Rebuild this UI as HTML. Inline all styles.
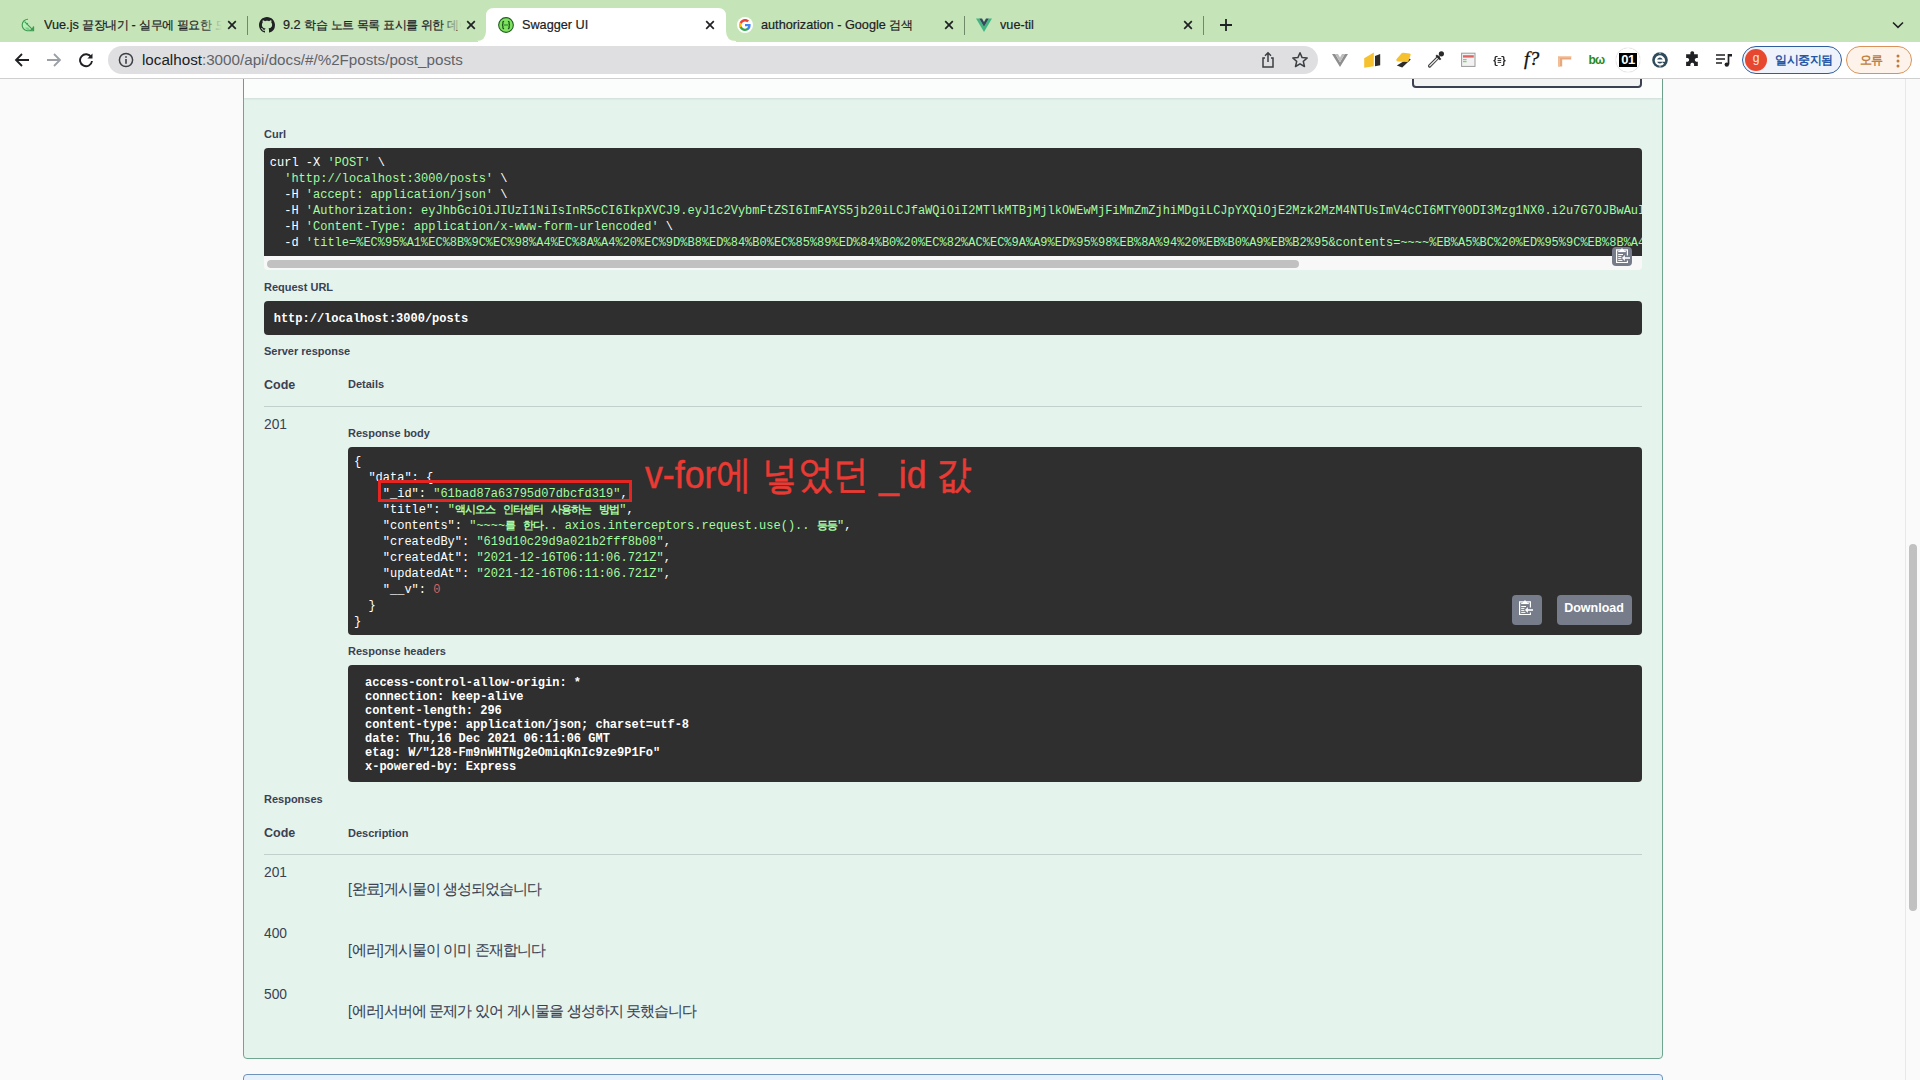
<!DOCTYPE html>
<html><head><meta charset="utf-8">
<style>
*{box-sizing:border-box;margin:0;padding:0}
html,body{width:1920px;height:1080px;overflow:hidden;background:#fafafa;font-family:"Liberation Sans",sans-serif;position:relative}
.a{position:absolute}
#tabbar{position:absolute;left:0;top:0;width:1920px;height:41px;background:#c5e5b9}
#toolbar{position:absolute;left:0;top:41px;width:1920px;height:38px;background:#fff;border-bottom:1px solid #cfcfcf}
.tt{position:absolute;top:17px;font-size:12.7px;line-height:16px;color:#202124;-webkit-text-stroke:0.2px #202124;white-space:nowrap;overflow:hidden}
.kd{font-size:15px;letter-spacing:-1.05px;-webkit-text-stroke:0.1px #3b4151}
.kt{font-size:11.6px;letter-spacing:-0.6px}
.fade{position:absolute;top:10px;width:22px;height:20px;background:linear-gradient(to right,rgba(197,229,185,0),#c5e5b9)}
.x{position:absolute;top:20px;width:10px;height:10px}
.sep{position:absolute;top:16px;width:1px;height:19px;background:#6f8a69}
.ico{position:absolute}
#page{position:absolute;left:0;top:79px;width:1905px;height:1001px;background:#fafafa;overflow:hidden}
#sb{position:absolute;left:1905px;top:79px;width:15px;height:1001px;background:#fafafa;border-left:1px solid #e8e8e8}
#thumb{position:absolute;left:1909px;top:544px;width:8px;height:367px;background:#c1c1c1;border-radius:4px}
.opblock{position:absolute;left:243px;top:-200px;width:1420px;height:1180px;border:1px solid #49cc90;border-radius:4px;background:#e8f5ef}
.lbl{position:absolute;font-size:11px;line-height:14px;font-weight:bold;color:#3b4151;white-space:nowrap}
.code{position:absolute;background:#333;border-radius:4px;overflow:hidden}
.mono{font-family:"Liberation Mono",monospace}
.g{color:#a2fca2}
.w{color:#fff}
.k{font-size:10.8px;letter-spacing:-0.8px;font-weight:bold}
pre{font-family:"Liberation Mono",monospace;font-size:12px;line-height:16px;white-space:pre;color:#fff;font-weight:normal}
</style></head><body>
<div id="tabbar">
  <!-- tab 1 -->
  <svg class="ico" style="left:20px;top:17px" width="16" height="16" viewBox="0 0 16 16"><path d="M8 2.2A5.8 5.8 0 1 0 13.6 9.4V13.8H8.6" fill="#b6f0b8" stroke="#3d9a50" stroke-width="1.1"/><path d="M4.6 4.6L13.3 13.4M6.5 7.5L7.8 6.2" stroke="#3d9a50" stroke-width="1.1"/><path d="M5 10.4H8.2L10.6 13.1H7Z" fill="#7fcf8a"/></svg>
  <div class="tt" style="left:44px;width:178px">Vue.js <span class=kt>끝장내기</span> - <span class=kt>실무에</span> <span class=kt>필요한</span> <span class=kt>모든</span> <span class=kt>것</span></div>
  <div class="fade" style="left:200px"></div>
  <svg class="x" style="left:227px" viewBox="0 0 10 10"><path d="M1.2 1.2L8.8 8.8M8.8 1.2L1.2 8.8" stroke="#202124" stroke-width="1.7"/></svg>
  <div class="sep" style="left:247px"></div>
  <!-- tab 2 -->
  <svg class="ico" style="left:259px;top:17px" width="16" height="16" viewBox="0 0 16 16"><path fill="#202124" d="M8 0C3.58 0 0 3.58 0 8c0 3.54 2.29 6.53 5.47 7.59.4.07.55-.17.55-.38 0-.19-.01-.82-.01-1.49-2.01.37-2.53-.49-2.69-.94-.09-.23-.48-.94-.82-1.13-.28-.15-.68-.52-.01-.53.63-.01 1.08.58 1.23.82.72 1.21 1.87.87 2.33.66.07-.52.28-.87.51-1.07-1.78-.2-3.64-.89-3.64-3.95 0-.87.31-1.59.82-2.15-.08-.2-.36-1.02.08-2.12 0 0 .67-.21 2.2.82.64-.18 1.32-.27 2-.27.68 0 1.36.09 2 .27 1.53-1.04 2.2-.82 2.2-.82.44 1.1.16 1.92.08 2.12.51.56.82 1.27.82 2.15 0 3.07-1.87 3.75-3.65 3.95.29.25.54.73.54 1.48 0 1.07-.01 1.93-.01 2.2 0 .21.15.46.55.38A8.013 8.013 0 0016 8c0-4.42-3.58-8-8-8z"/></svg>
  <div class="tt" style="left:283px;width:178px">9.2 <span class=kt>학습</span> <span class=kt>노트</span> <span class=kt>목록</span> <span class=kt>표시를</span> <span class=kt>위한</span> <span class=kt>데이터</span> <span class=kt>조회</span></div>
  <div class="fade" style="left:440px"></div>
  <svg class="x" style="left:466px" viewBox="0 0 10 10"><path d="M1.2 1.2L8.8 8.8M8.8 1.2L1.2 8.8" stroke="#202124" stroke-width="1.7"/></svg>
  <!-- active tab -->
  <svg class="ico" style="left:476px;top:8px" width="262" height="33" viewBox="0 0 262 33"><path d="M0 33 Q10 33 10 23 L10 8 Q10 0 18 0 L242 0 Q250 0 250 8 L250 23 Q250 33 260 33 Z" fill="#fff"/></svg>
  <svg class="ico" style="left:498px;top:17px" width="16" height="16" viewBox="0 0 16 16"><circle cx="8" cy="8" r="7.35" fill="#7fe25f" stroke="#215d22" stroke-width="1.1"/><path d="M6.1 4.3Q4.8 4.3 4.9 5.6V7.1Q4.9 7.9 4 8Q4.9 8.1 4.9 8.9V10.4Q4.8 11.7 6.1 11.7M9.9 4.3Q11.2 4.3 11.1 5.6V7.1Q11.1 7.9 12 8Q11.1 8.1 11.1 8.9V10.4Q11.2 11.7 9.9 11.7" fill="none" stroke="#1b4f1b" stroke-width="1.25"/><rect x="5.9" y="7.3" width="4.2" height="1.4" fill="#3a9a35"/></svg>
  <div class="tt" style="left:522px">Swagger UI</div>
  <svg class="x" style="left:705px" viewBox="0 0 10 10"><path d="M1.2 1.2L8.8 8.8M8.8 1.2L1.2 8.8" stroke="#202124" stroke-width="1.7"/></svg>
  <!-- tab 4 -->
  <div class="a" style="left:737px;top:17px;width:16px;height:16px;border-radius:8px;background:#fff"></div><svg class="ico" style="left:739px;top:19px" width="12" height="12" viewBox="0 0 16 16"><path d="M15.5 8.2c0-.6-.05-1.1-.15-1.6H8v3h4.2c-.2 1-.75 1.8-1.6 2.35v2h2.6c1.5-1.4 2.3-3.4 2.3-5.75z" fill="#4285f4"/><path d="M8 16c2.15 0 3.95-.7 5.25-1.95l-2.6-2c-.7.5-1.6.8-2.65.8-2.05 0-3.8-1.4-4.4-3.25H.9v2.05C2.2 14.25 4.9 16 8 16z" fill="#34a853"/><path d="M3.6 9.6c-.15-.5-.25-1-.25-1.6s.1-1.1.25-1.6V4.35H.9C.35 5.45 0 6.7 0 8s.35 2.55.9 3.65l2.7-2.05z" fill="#fbbc05"/><path d="M8 3.2c1.2 0 2.25.4 3.1 1.2l2.3-2.3C12 .8 10.15 0 8 0 4.9 0 2.2 1.75.9 4.35l2.7 2.05C4.2 4.6 5.95 3.2 8 3.2z" fill="#ea4335"/></svg>
  <div class="tt" style="left:761px">authorization - Google <span class=kt>검색</span></div>
  <svg class="x" style="left:944px" viewBox="0 0 10 10"><path d="M1.2 1.2L8.8 8.8M8.8 1.2L1.2 8.8" stroke="#202124" stroke-width="1.7"/></svg>
  <div class="sep" style="left:964px"></div>
  <!-- tab 5 -->
  <svg class="ico" style="left:976px;top:17px" width="16" height="16" viewBox="0 0 16 16"><path d="M0 1.5 H3.2 L8 9.8 L12.8 1.5 H16 L8 15 Z" fill="#41b883"/><path d="M3.2 1.5 H6 L8 5 L10 1.5 H12.8 L8 9.8 Z" fill="#34495e"/></svg>
  <div class="tt" style="left:1000px">vue-til</div>
  <svg class="x" style="left:1183px" viewBox="0 0 10 10"><path d="M1.2 1.2L8.8 8.8M8.8 1.2L1.2 8.8" stroke="#202124" stroke-width="1.7"/></svg>
  <div class="sep" style="left:1203px"></div>
  <svg class="ico" style="left:1219px;top:18px" width="14" height="14" viewBox="0 0 14 14"><path d="M7 1V13M1 7H13" stroke="#202124" stroke-width="1.8"/></svg>
  <svg class="ico" style="left:1892px;top:21px" width="12" height="8" viewBox="0 0 12 8"><path d="M1 1.5L6 6.3L11 1.5" fill="none" stroke="#202124" stroke-width="1.6"/></svg>
</div>
<div id="toolbar">
  <svg class="ico" style="left:14px;top:11px" width="16" height="16" viewBox="0 0 16 16"><path d="M15 8H2M8 2L2 8L8 14" fill="none" stroke="#202124" stroke-width="1.8"/></svg>
  <svg class="ico" style="left:46px;top:11px" width="16" height="16" viewBox="0 0 16 16"><path d="M1 8H14M8 2L14 8L8 14" fill="none" stroke="#9aa0a6" stroke-width="1.8"/></svg>
  <svg class="ico" style="left:78px;top:11px" width="16" height="16" viewBox="0 0 16 16"><path d="M13.2 5.2A6 6 0 1 0 14 9" fill="none" stroke="#202124" stroke-width="1.9"/><path d="M14.5 1.5V6.6H9.4Z" fill="#202124"/></svg>
  <div class="a" style="left:108px;top:5px;width:1210px;height:28px;border-radius:14px;background:#dfdfe2"></div>
  <svg class="ico" style="left:118px;top:11px" width="16" height="16" viewBox="0 0 16 16"><circle cx="8" cy="8" r="6.6" fill="none" stroke="#3c4043" stroke-width="1.5"/><rect x="7.2" y="7" width="1.6" height="4.8" fill="#3c4043"/><rect x="7.2" y="4.2" width="1.6" height="1.6" fill="#3c4043"/></svg>
  <div class="a" style="left:142px;top:10px;font-size:15.2px;line-height:17px;color:#202124;white-space:nowrap">localhost<span style="color:#5f6368">:3000/api/docs/#/%2Fposts/post_posts</span></div>
  <svg class="ico" style="left:1260px;top:10px" width="16" height="18" viewBox="0 0 16 18"><path d="M5 7H3V16H13V7H11" fill="none" stroke="#3c4043" stroke-width="1.5"/><path d="M8 11V2M5 4.8L8 1.8L11 4.8" fill="none" stroke="#3c4043" stroke-width="1.5"/></svg>
  <svg class="ico" style="left:1291px;top:10px" width="18" height="18" viewBox="0 0 18 18"><path d="M9 1.8L11.1 6.6L16.2 7L12.3 10.4L13.5 15.5L9 12.8L4.5 15.5L5.7 10.4L1.8 7L6.9 6.6Z" fill="none" stroke="#3c4043" stroke-width="1.5" stroke-linejoin="round"/></svg>
  <!-- extensions -->
  <svg class="ico" style="left:1332px;top:11px" width="16" height="16" viewBox="0 0 16 16"><path d="M0 2H3.2L8 10.2L12.8 2H16L8 15Z" fill="#8f8f8f"/><path d="M3.2 2H6L8 5.4L10 2H12.8L8 10.2Z" fill="#bdbdbd"/></svg>
  <svg class="ico" style="left:1360px;top:50px;position:fixed" width="24" height="20" viewBox="1360 50 24 20"><path d="M1364.2 58.2L1373.8 52.6V66.2L1364.2 67.8Z" fill="#f6c12e"/><path d="M1375 56L1380.2 54V65.2L1375 66.3Z" fill="#2e2b28"/></svg>
  <svg class="ico" style="left:1392px;top:50px;position:fixed" width="24" height="20" viewBox="1392 50 24 20"><path d="M1396.8 65.6L1402.2 67.6L1410.8 59.6L1408.6 58.2Z" fill="#2e2b28"/><path d="M1396.4 60.4Q1396 59.6 1396.8 58.8L1401.6 53.2Q1402.3 52.5 1403.2 52.7L1409.6 53.6Q1411 54 1410.6 55L1408.4 61.2Q1408 62 1407 62L1398 61.6Q1397 61.5 1396.4 60.4Z" fill="#f6c12e"/></svg>
  <svg class="ico" style="left:1424px;top:48px;position:fixed" width="24" height="22" viewBox="1424 48 24 22"><path d="M1429.6 66L1438.4 57.2" stroke="#3a3a3a" stroke-width="3.2" stroke-linecap="round"/><path d="M1429.8 65.8L1438.2 57.4" stroke="#e6e6e6" stroke-width="1.4" stroke-linecap="round"/><path d="M1436.2 55.2L1440.6 59.6" stroke="#2a2a2a" stroke-width="2"/><circle cx="1441.4" cy="53.8" r="2.6" fill="#2a2a2a"/></svg>
  <svg class="ico" style="left:1458px;top:50px;position:fixed" width="20" height="20" viewBox="1458 50 20 20"><rect x="1461.6" y="53.2" width="13.4" height="13.2" fill="#f2f2f2" stroke="#9a9a9a" stroke-width="1"/><rect x="1463" y="55.2" width="10.8" height="2.4" fill="#e06464"/><rect x="1463" y="59.2" width="3.6" height="1" fill="#6cc36c"/><rect x="1463" y="61.2" width="3.6" height="1" fill="#6cc36c"/></svg>
  <svg class="ico" style="left:1490px;top:52px;position:fixed" width="20" height="16" viewBox="1490 52 20 16"><text x="1492.5" y="64" font-family="Liberation Mono" font-size="10" font-weight="bold" fill="#202124">{</text><text x="1500.6" y="64" font-family="Liberation Mono" font-size="10" font-weight="bold" fill="#202124">}</text><path d="M1497.6 58.6H1501.2M1497.6 60.5H1501.2M1497.6 62.4H1501.2" stroke="#333" stroke-width="1"/></svg>
  <div class="a" style="left:1524px;top:7px;font-family:'Liberation Serif',serif;font-style:italic;font-weight:normal;font-size:19.5px;line-height:22px;color:#111;-webkit-text-stroke:0.3px #111">f?</div>
  <svg class="ico" style="left:1554px;top:50px;position:fixed" width="20" height="20" viewBox="1554 50 20 20"><path d="M1558 56.2H1571.2V59.4H1562.2V66.4H1558.2Z" fill="#e8a87e"/><path d="M1558 56.2H1571.2V57.4H1558Z" fill="#f6cfb0"/><path d="M1558.2 58H1560V66.4H1558.2Z" fill="#f2c09a"/></svg>
  <div class="a" style="left:1588.5px;top:11px;font-size:12px;line-height:16px;color:#258a25;font-weight:bold;letter-spacing:-0.8px">bω</div>
  <div class="a" style="left:1616px;top:7px;width:24px;height:24px;border-radius:12px;background:#fff;box-shadow:0 0 1px rgba(0,0,0,.4)"></div>
  <div class="a" style="left:1619px;top:12px;width:18px;height:14px;background:#000;color:#fff;font-size:13px;line-height:14px;font-weight:bold;text-align:center;letter-spacing:-0.5px">01</div>
  <svg class="ico" style="left:1652px;top:11px" width="16" height="16" viewBox="0 0 16 16"><circle cx="8" cy="8" r="7.8" fill="#2f4a5b"/><path d="M3.8 8.6H12A4.1 4.1 0 1 0 11.2 11" fill="none" stroke="#fff" stroke-width="2.2"/><rect x="7.3" y="0" width="1.4" height="2" fill="#9fb3c0"/><rect x="7.3" y="14" width="1.4" height="2" fill="#9fb3c0"/></svg>
  <svg class="ico" style="left:1684px;top:10px" width="17" height="17" viewBox="0 0 16 16"><path d="M6 1.5A1.8 1.8 0 0 1 9.5 1.5V3H13V6.5H11.5A1.8 1.8 0 0 0 11.5 10H13V14H9.5V12.5A1.8 1.8 0 0 0 6 12.5V14H2V10H3.5A1.8 1.8 0 0 0 3.5 6.5H2V3H6Z" fill="#202124"/></svg>
  <svg class="ico" style="left:1715px;top:11px" width="18" height="16" viewBox="0 0 18 16"><path d="M1 3H10M1 7H10M1 11H7" stroke="#202124" stroke-width="1.7"/><path d="M13.5 2V12.5" stroke="#202124" stroke-width="1.7"/><path d="M13.5 2H17V4.5H13.5Z" fill="#202124"/><circle cx="11.8" cy="12.6" r="2.2" fill="#202124"/></svg>
  <div class="a" style="left:1742px;top:5px;width:100px;height:28px;border-radius:14px;border:1.5px solid #2f5d9e;background:#edf2fb"></div>
  <div class="a" style="left:1745px;top:8px;width:22px;height:22px;border-radius:11px;background:#e8472f;color:#ffe9e4;font-size:12px;line-height:19px;text-align:center">g</div>
  <div class="a" style="left:1775px;top:11px;font-size:12px;line-height:16px;color:#2458a6;white-space:nowrap;font-weight:bold;letter-spacing:-0.4px">일시중지됨</div>
  <div class="a" style="left:1846px;top:5px;width:66px;height:28px;border-radius:14px;border:1.5px solid #d9935a;background:#fdf3ea"></div>
  <div class="a" style="left:1860px;top:11px;font-size:12px;line-height:16px;color:#c07f45;white-space:nowrap;font-weight:bold;letter-spacing:-0.6px">오류</div>
  <svg class="ico" style="left:1896px;top:12px" width="4" height="16" viewBox="0 0 4 16"><circle cx="2" cy="3" r="1.5" fill="#c07a3a"/><circle cx="2" cy="8" r="1.5" fill="#c07a3a"/><circle cx="2" cy="13" r="1.5" fill="#c07a3a"/></svg>
</div>
<div class="a" style="left:0;top:41px;width:478px;height:1px;background:#c5e5b9"></div><div class="a" style="left:736px;top:41px;width:1184px;height:1px;background:#c5e5b9"></div>

<div class="a" style="left:0;top:79px;width:1905px;height:1001px;overflow:hidden"><div class="a" style="left:0;top:-79px;width:1905px;height:1080px">
<div class="a" style="left:243px;top:-200px;width:1420px;height:1259px;border:1px solid #70a690;border-radius:4px;background:#e4f4ed"></div>
<div class="a" style="left:244px;top:40px;width:1418px;height:58px;background:rgba(255,255,255,.8);box-shadow:0 1px 2px rgba(0,0,0,.1)"></div>
<div class="a" style="left:1412px;top:40px;width:230px;height:48px;border:2px solid #3b4151;border-radius:4px;background:rgba(0,0,0,.035)"></div>
<div class="a" style="left:264px;top:127.69px;font-size:11px;line-height:13px;font-weight:bold;color:#3b4151;white-space:nowrap;">Curl</div>
<div class="a" style="left:264px;top:148px;width:1378px;height:122px;border-radius:4px;overflow:hidden;background:#f8f8f8"><div class="a" style="left:0;top:0;width:1378px;height:108px;background:#2f2f2f"></div><pre class="a" style="left:5.8px;top:6.80px">curl -X <span class=g>'POST'</span> \
  <span class=g>'http://localhost:3000/posts'</span> \
  -H <span class=g>'accept: application/json'</span> \
  -H <span class=g>'Authorization: eyJhbGciOiJIUzI1NiIsInR5cCI6IkpXVCJ9.eyJ1c2VybmFtZSI6ImFAYS5jb20iLCJfaWQiOiI2MTlkMTBjMjlkOWEwMjFiMmZmZjhiMDgiLCJpYXQiOjE2Mzk2MzM4NTUsImV4cCI6MTY0ODI3Mzg1NX0.i2u7G7OJBwAuIq3vS9xk2pWm5RzT0dLhYcNfE8aUoKs'</span> \
  -H <span class=g>'Content-Type: application/x-www-form-urlencoded'</span> \
  -d <span class=g>'title=%EC%95%A1%EC%8B%9C%EC%98%A4%EC%8A%A4%20%EC%9D%B8%ED%84%B0%EC%85%89%ED%84%B0%20%EC%82%AC%EC%9A%A9%ED%95%98%EB%8A%94%20%EB%B0%A9%EB%B2%95&amp;contents=~~~~%EB%A5%BC%20%ED%95%9C%EB%8B%A4..%20axios.interceptors.request.use%28%29..%20%EB%93%B1%EB%93%B1'</span></pre><div class="a" style="left:3px;top:112px;width:1032px;height:8px;border-radius:4px;background:#c1c1c1"></div></div>
<div class="a" style="left:1612px;top:246.5px;width:20px;height:19.5px;border-radius:4px;background:#767c8a"></div><svg class="a" style="left:1615.9px;top:247.8px" width="15" height="15" viewBox="0 0 15 15"><path d="M11.4 7.4V1.9H0.6V14.6H11.4V12.4" fill="none" stroke="#fff" stroke-width="1.2"/><path d="M2.2 3.4H9.8" stroke="#fff" stroke-width="1.4"/><path d="M3.6 3.2Q4 1.6 5 1.5Q5.4 0.2 6 0.2Q6.6 0.2 7 1.5Q8 1.6 8.4 3.2Z" fill="#fff"/><path d="M2.2 6.5H7M2.2 8.4H5.4M2.2 10.4H5.4M2.2 12.4H6.4" stroke="#fff" stroke-width="1.0"/><path d="M8.4 10H14" stroke="#fff" stroke-width="1.6"/><path d="M6 10L8.9 7.1V12.9Z" fill="#fff"/></svg>
<div class="a" style="left:264px;top:281.19px;font-size:11px;line-height:13px;font-weight:bold;color:#3b4151;white-space:nowrap;">Request URL</div>
<div class="a" style="left:264px;top:301px;width:1378px;height:34px;border-radius:4px;background:#2f2f2f"></div>
<div class="a" style="left:273.7px;top:312.40px;font-family:'Liberation Mono',monospace;font-size:12px;line-height:14px;font-weight:bold;color:#fff;white-space:pre">http://localhost:3000/posts</div>
<div class="a" style="left:264px;top:345.39px;font-size:11px;line-height:13px;font-weight:bold;color:#3b4151;white-space:nowrap;">Server response</div>
<div class="a" style="left:264px;top:377.97px;font-size:12.5px;line-height:14px;font-weight:bold;color:#3b4151;white-space:nowrap;">Code</div>
<div class="a" style="left:348px;top:378.29px;font-size:11px;line-height:13px;font-weight:bold;color:#3b4151;white-space:nowrap;">Details</div>
<div class="a" style="left:264px;top:406px;width:1378px;height:1px;background:rgba(59,65,81,.2)"></div>
<div class="a" style="left:264px;top:416.52px;font-size:13.8px;line-height:16px;font-weight:normal;color:#3b4151;white-space:nowrap;">201</div>
<div class="a" style="left:348px;top:427.29px;font-size:11px;line-height:13px;font-weight:bold;color:#3b4151;white-space:nowrap;">Response body</div>
<div class="a" style="left:348px;top:447px;width:1294px;height:188px;border-radius:4px;background:#2f2f2f"></div>
<pre class="a" style="left:354px;top:453.80px">{
  "data": {
    "_id": <span class=g>"61bad87a63795d07dbcfd319"</span>,
    "title": <span class=g>"<span class=k>액시오스</span> <span class=k>인터셉터</span> <span class=k>사용하는</span> <span class=k>방법</span>"</span>,
    "contents": <span class=g>"~~~~<span class=k>를</span> <span class=k>한다</span>.. axios.interceptors.request.use().. <span class=k>등등</span>"</span>,
    "createdBy": <span class=g>"619d10c29d9a021b2fff8b08"</span>,
    "createdAt": <span class=g>"2021-12-16T06:11:06.721Z"</span>,
    "updatedAt": <span class=g>"2021-12-16T06:11:06.721Z"</span>,
    "__v": <span style="color:#d36363">0</span>
  }
}</pre>
<div class="a" style="left:1512px;top:595px;width:30px;height:30px;border-radius:4px;background:#767c8a"></div><svg class="a" style="left:1519px;top:600.2px" width="15" height="15" viewBox="0 0 15 15"><path d="M11.4 7.4V1.9H0.6V14.6H11.4V12.4" fill="none" stroke="#fff" stroke-width="1.2"/><path d="M2.2 3.4H9.8" stroke="#fff" stroke-width="1.4"/><path d="M3.6 3.2Q4 1.6 5 1.5Q5.4 0.2 6 0.2Q6.6 0.2 7 1.5Q8 1.6 8.4 3.2Z" fill="#fff"/><path d="M2.2 6.5H7M2.2 8.4H5.4M2.2 10.4H5.4M2.2 12.4H6.4" stroke="#fff" stroke-width="1.0"/><path d="M8.4 10H14" stroke="#fff" stroke-width="1.6"/><path d="M6 10L8.9 7.1V12.9Z" fill="#fff"/></svg>
<div class="a" style="left:1557px;top:595px;width:75px;height:30px;border-radius:4px;background:#767c8a"></div>
<div class="a" style="left:1564.2px;top:601.17px;font-size:12.5px;line-height:14px;font-weight:bold;color:#fff;white-space:nowrap;">Download</div>
<div class="a" style="left:378px;top:480px;width:254px;height:22px;border:3px solid #e52521"></div>
<div class="a" style="left:645px;top:452.49px;font-size:39px;line-height:45px;font-weight:normal;color:#ea3a33;white-space:nowrap;transform:scaleX(0.915);transform-origin:0 0;-webkit-text-stroke:0.5px #ea3a33">v-for에 넣었던 _id 값</div>
<div class="a" style="left:348px;top:645.29px;font-size:11px;line-height:13px;font-weight:bold;color:#3b4151;white-space:nowrap;">Response headers</div>
<div class="a" style="left:348px;top:665px;width:1294px;height:117px;border-radius:4px;background:#2f2f2f"></div>
<pre class="a" style="left:365px;top:676.40px;line-height:14px;font-weight:bold">access-control-allow-origin: *
connection: keep-alive
content-length: 296
content-type: application/json; charset=utf-8
date: Thu,16 Dec 2021 06:11:06 GMT
etag: W/"128-Fm9nWHTNg2eOmiqKnIc9ze9P1Fo"
x-powered-by: Express</pre>
<div class="a" style="left:264px;top:793.19px;font-size:11px;line-height:13px;font-weight:bold;color:#3b4151;white-space:nowrap;">Responses</div>
<div class="a" style="left:264px;top:825.67px;font-size:12.5px;line-height:14px;font-weight:bold;color:#3b4151;white-space:nowrap;">Code</div>
<div class="a" style="left:348px;top:826.69px;font-size:11px;line-height:13px;font-weight:bold;color:#3b4151;white-space:nowrap;">Description</div>
<div class="a" style="left:264px;top:854px;width:1378px;height:1px;background:rgba(59,65,81,.2)"></div>
<div class="a" style="left:264px;top:864.62px;font-size:13.8px;line-height:16px;font-weight:normal;color:#3b4151;white-space:nowrap;">201</div>
<div class="a" style="left:348px;top:880.75px;font-size:14px;line-height:16px;font-weight:normal;color:#3b4151;white-space:nowrap;">[<span class=kd>완료</span>]<span class=kd>게시물이</span> <span class=kd>생성되었습니다</span></div>
<div class="a" style="left:264px;top:925.62px;font-size:13.8px;line-height:16px;font-weight:normal;color:#3b4151;white-space:nowrap;">400</div>
<div class="a" style="left:348px;top:941.55px;font-size:14px;line-height:16px;font-weight:normal;color:#3b4151;white-space:nowrap;">[<span class=kd>에러</span>]<span class=kd>게시물이</span> <span class=kd>이미</span> <span class=kd>존재합니다</span></div>
<div class="a" style="left:264px;top:986.62px;font-size:13.8px;line-height:16px;font-weight:normal;color:#3b4151;white-space:nowrap;">500</div>
<div class="a" style="left:348px;top:1002.55px;font-size:14px;line-height:16px;font-weight:normal;color:#3b4151;white-space:nowrap;">[<span class=kd>에러</span>]<span class=kd>서버에</span> <span class=kd>문제가</span> <span class=kd>있어</span> <span class=kd>게시물을</span> <span class=kd>생성하지</span> <span class=kd>못했습니다</span></div>
<div class="a" style="left:243px;top:1074px;width:1420px;height:100px;border:1px solid #6d93bb;border-radius:4px;background:#e6f1fc"></div>
</div></div>
<div id="sb"></div><div id="thumb"></div>
</body></html>
